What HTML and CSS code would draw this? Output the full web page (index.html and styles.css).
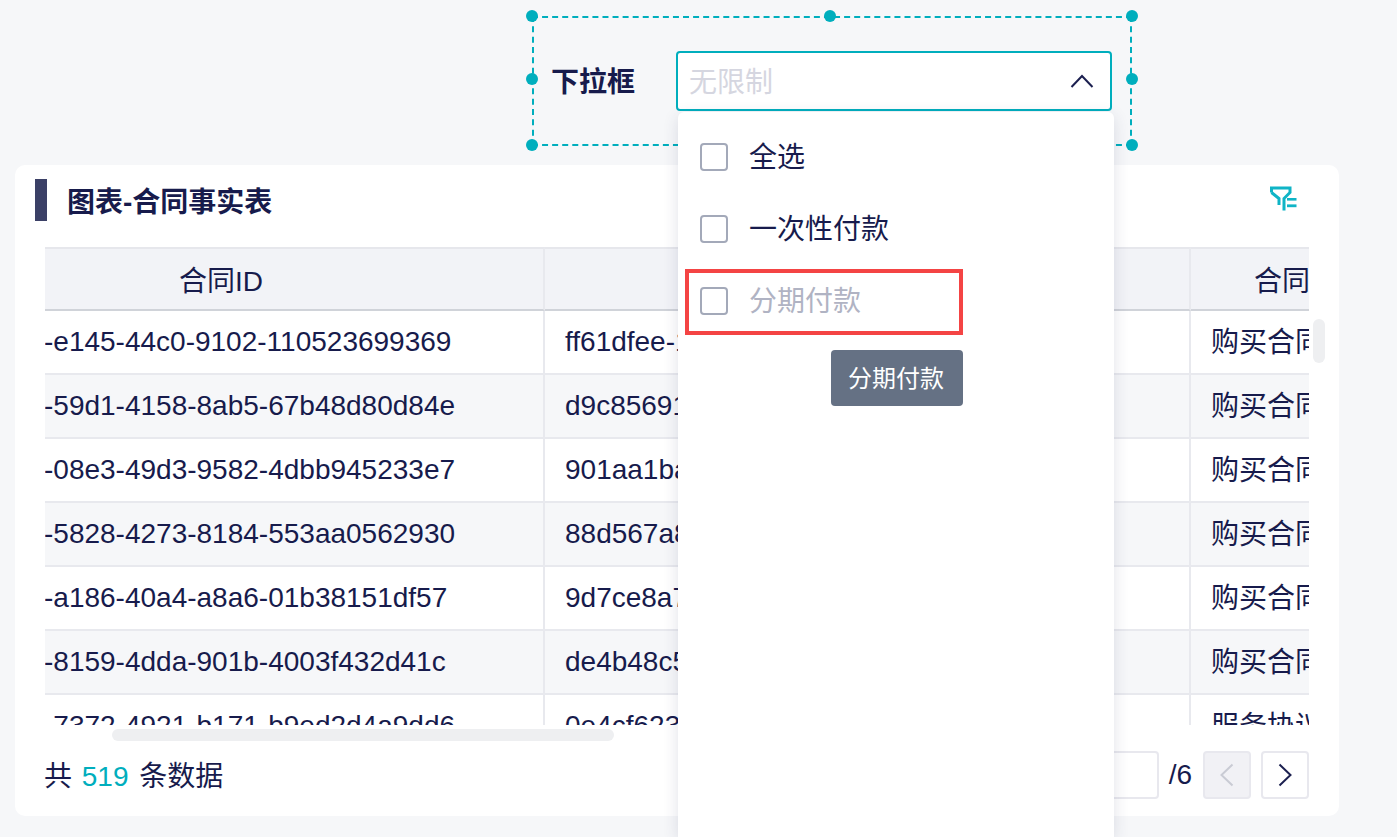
FILE: index.html
```html
<!DOCTYPE html>
<html lang="zh-CN">
<head>
<meta charset="utf-8">
<title>下拉框</title>
<link rel="stylesheet" href="styles.css">
</head>
<body>
<div class="page">
  <section class="widget">
    <span class="handle h-tl"></span><span class="handle h-tc"></span><span class="handle h-tr"></span>
    <span class="handle h-ml"></span><span class="handle h-mr"></span>
    <span class="handle h-bl"></span><span class="handle h-br"></span>
    <label class="widget-label">下拉框</label>
    <div class="select">
      <span class="placeholder">无限制</span>
      <svg class="chevron" width="24" height="14" viewBox="0 0 24 14"><path d="M1.5 13 L12 2 L22.5 13" fill="none" stroke="#1c2050" stroke-width="2"/></svg>
    </div>
    <div class="dropdown">
      <div class="option"><span class="check"></span><span class="opt-text">全选</span></div>
      <div class="option"><span class="check"></span><span class="opt-text">一次性付款</span></div>
      <div class="option option-hover"><span class="check"></span><span class="opt-text">分期付款</span></div>
      <div class="tooltip">分期付款</div>
    </div>
  </section>

  <section class="card">
    <header class="card-head">
      <span class="bar"></span>
      <h2 class="card-title">图表-合同事实表</h2>
      <svg class="filter-icon" width="27" height="25" viewBox="0 0 27 25"><path d="M1.5 6.5 V2 H20 V6.5 L14 12.5 V24.5 M1.5 6.5 L9 12.5 V19" fill="none" stroke="#0fb4c6" stroke-width="3"/><rect x="17" y="12" width="9.5" height="2.6" fill="#0fb4c6"/><rect x="17" y="18.4" width="9.5" height="2.8" fill="#0fb4c6"/></svg>
    </header>
    <div class="table-wrap">
      <div class="table-view">
        <table class="table">
          <colgroup><col class="c1"><col class="c2"><col class="c3"></colgroup>
          <thead>
            <tr><th class="th-first">合同ID</th><th></th><th class="th-last">合同类型</th></tr>
          </thead>
          <tbody>
            <tr><td class="id">-e145-44c0-9102-110523699369</td><td class="pad">ff61dfee-1</td><td class="pad cjk">购买合同</td></tr>
            <tr><td class="id">-59d1-4158-8ab5-67b48d80d84e</td><td class="pad">d9c85691</td><td class="pad cjk">购买合同</td></tr>
            <tr><td class="id">-08e3-49d3-9582-4dbb945233e7</td><td class="pad">901aa1ba</td><td class="pad cjk">购买合同</td></tr>
            <tr><td class="id">-5828-4273-8184-553aa0562930</td><td class="pad">88d567a8</td><td class="pad cjk">购买合同</td></tr>
            <tr><td class="id">-a186-40a4-a8a6-01b38151df57</td><td class="pad">9d7ce8a7</td><td class="pad cjk">购买合同</td></tr>
            <tr><td class="id">-8159-4dda-901b-4003f432d41c</td><td class="pad">de4b48c5</td><td class="pad cjk">购买合同</td></tr>
            <tr><td class="id">-7372-4921-b171-b9ed2d4a9dd6</td><td class="pad">0e4cf623</td><td class="pad cjk">服务协议</td></tr>
          </tbody>
        </table>
      </div>
      <span class="scroll-v"></span>
      <span class="scroll-h"></span>
    </div>
    <footer class="card-foot">
      <div class="total">共 <em>519</em> 条数据</div>
      <div class="pager">
        <span class="page-input"></span>
        <span class="page-count">/6</span>
        <button class="page-btn disabled"><svg width="16" height="24" viewBox="0 0 16 24"><path d="M13.5 1.5 L2.5 12 L13.5 22.5" fill="none" stroke="#c9cbd4" stroke-width="2"/></svg></button>
        <button class="page-btn"><svg width="16" height="24" viewBox="0 0 16 24"><path d="M2.5 1.5 L13.5 12 L2.5 22.5" fill="none" stroke="#1c2050" stroke-width="2"/></svg></button>
      </div>
    </footer>
  </section>
</div>
</body>
</html>
```
FILE: styles.css
```css
*, *::after { box-sizing: border-box; }
html, body { margin: 0; height: 100%; overflow: hidden; }
body {
  background: #f6f7f9;
  color: #171b4c;
  font-family: "Liberation Sans", "Noto Sans CJK SC", sans-serif;
  font-size: 28px;
}
.page { padding: 16px 58px 0 15px; }

/* selected dropdown widget */
.widget {
  position: relative;
  margin-left: 517px;
  width: 600px;
  height: 130px;
  border: 2px dashed #00aebd;
  display: flex;
  align-items: center;
  padding: 0 0 0 17px;
  z-index: 2;
}
.handle {
  position: absolute;
  width: 12px;
  height: 12px;
  border-radius: 50%;
  background: #00aebd;
}
.h-tl { left: -8px; top: -8px; }
.h-tc { left: 290px; top: -8px; }
.h-tr { right: -8px; top: -8px; }
.h-ml { left: -8px; top: 55px; }
.h-mr { right: -8px; top: 55px; }
.h-bl { left: -8px; bottom: -7px; }
.h-br { right: -8px; bottom: -7px; }
.widget-label { flex: none; width: 125px; font-weight: 700; line-height: 40px; margin-top: 4px; }
.select {
  flex: none;
  width: 436px;
  height: 60px;
  background: #fff;
  border: 2px solid #00aebd;
  border-radius: 4px;
  display: flex;
  align-items: center;
  justify-content: space-between;
  padding: 0 16px 0 11px;
}
.placeholder { color: #d5d6e0; margin-bottom: 2px; }
.chevron { display: block; }

.dropdown {
  position: absolute;
  left: 144px;
  top: 94px;
  width: 436px;
  height: 725px;
  background: #fff;
  border-radius: 6px 6px 0 0;
  box-shadow: 0 4px 16px rgba(40, 50, 90, .14);
  padding-top: 9px;
}
.option {
  position: relative;
  height: 72px;
  display: flex;
  align-items: center;
  gap: 21px;
  padding-left: 22px;
}
.opt-text { margin-bottom: 4px; }
.check {
  width: 28px;
  height: 28px;
  border: 2px solid #a3a9b9;
  border-radius: 4px;
  background: #fff;
}
.option-hover { color: #b0b3c3; }
.option-hover::after {
  content: "";
  position: absolute;
  left: 7px;
  top: 4px;
  width: 278px;
  height: 66px;
  border: 4px solid #f44444;
}
.tooltip {
  position: absolute;
  left: 153px;
  top: 238px;
  width: 132px;
  height: 56px;
  background: #657184;
  color: #fff;
  border-radius: 4px;
  font-size: 24px;
  line-height: 58px;
  text-align: center;
  padding-right: 2px;
}

/* chart card */
.card {
  margin-top: 19px;
  width: 1324px;
  height: 651px;
  background: #fff;
  border-radius: 10px;
  padding: 14px 30px 0 30px;
}
.card-head {
  position: relative;
  height: 68px;
  display: flex;
  align-items: flex-start;
}
.bar { width: 12px; height: 42px; margin-left: -10px; background: #3b4066; }
.card-title { margin: 3px 0 0 20px; font-size: 28px; line-height: 42px; font-weight: 700; }
.filter-icon { margin-left: auto; margin-right: 12px; margin-top: 7px; display: block; }

.table-wrap { position: relative; height: 478px; }
.table-view { width: 1264px; height: 478px; overflow: hidden; }
.table { width: 1264px; table-layout: fixed; border-collapse: separate; border-spacing: 0; }
.c1 { width: 500px; }
.c2 { width: 646px; }
.c3 { width: 118px; }
.table th, .table td {
  height: 64px;
  padding: 0;
  white-space: nowrap;
  overflow: hidden;
  font-weight: 400;
  border-right: 2px solid #e8e9ee;
  border-bottom: 2px solid #e8e9ee;
}
.table th:last-child, .table td:last-child { border-right: 0; }
.table th {
  background: #f2f3f7;
  border-top: 2px solid #e6e7ec;
  border-bottom: 2px solid #d0d3d9;
}
.table .th-first { text-align: center; padding-right: 146px; }
.table .th-last { text-align: left; padding-left: 63px; }
.table td.id { text-indent: -1px; }
.table td.pad { padding-left: 20px; }
.table td.cjk { padding-bottom: 4px; }
.table tbody tr:nth-child(even) td { background: #f6f7f9; }
.scroll-v {
  position: absolute;
  left: 1268px;
  top: 72px;
  width: 12px;
  height: 44px;
  border-radius: 6px;
  background: #eeeff1;
}
.scroll-h {
  position: absolute;
  left: 67px;
  top: 482px;
  width: 502px;
  height: 12px;
  border-radius: 6px;
  background: #eeeff1;
}

.card-foot {
  display: flex;
  align-items: flex-start;
  justify-content: space-between;
  padding-top: 26px;
}
.total { line-height: 52px; margin-left: -1px; }
.total em { font-style: normal; color: #00aebd; margin: 0 3px 0 2px; }
.pager { display: flex; align-items: center; }
.page-input {
  width: 72px;
  height: 48px;
  border: 2px solid #e8e8ee;
  border-radius: 4px;
  background: #fff;
}
.page-count { margin: 0 11px 0 10px; }
.page-btn {
  width: 48px;
  height: 48px;
  margin: 0 0 0 10px;
  padding: 0;
  background: #fff;
  border: 2px solid #e8e8ee;
  border-radius: 4px;
  display: flex;
  align-items: center;
  justify-content: center;
}
.page-count + .page-btn { margin-left: 0; }
.page-btn.disabled { background: #f1f1f5; }
```
